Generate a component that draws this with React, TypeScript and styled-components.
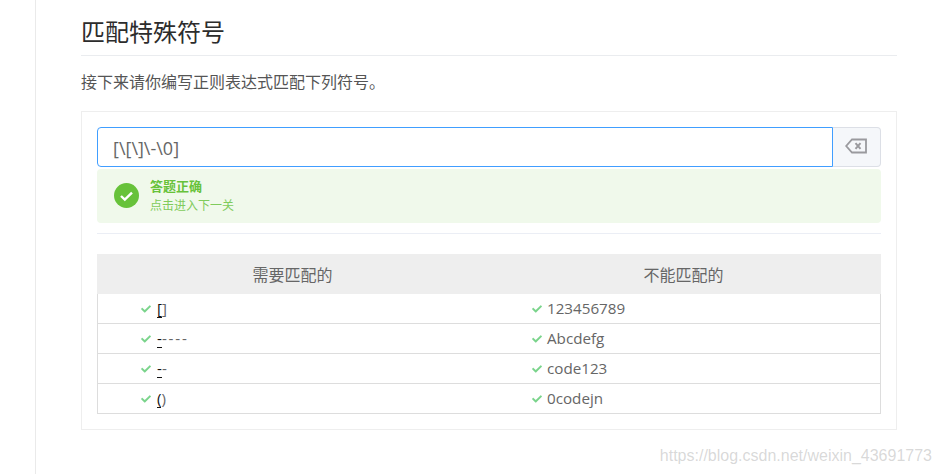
// 匹配特殊符号 关卡页面

import styled, { createGlobalStyle } from "styled-components";
import { FaCheck } from "react-icons/fa";

const GlobalStyle = createGlobalStyle`
    html, body {
        margin: 0;
        height: 474px;
        overflow: hidden;
        background: #fff;
        font-family: "Open Sans", "Noto Sans CJK SC", sans-serif;
    }
    * {
        box-sizing: border-box;
    }
`;

const Page = styled.div`
    position: relative;
    height: 474px;
    margin-left: 35px;
    padding: 12px 44px 0 45px;
    border-left: 1px solid #eaeaea;
`;

const Title = styled.h2`
    margin: 0;
    height: 44px;
    font-size: 24px;
    font-weight: 400;
    line-height: 40px;
    color: #2c2c2c;
    border-bottom: 1px solid #eaecef;
`;

const Intro = styled.p`
    margin: 0;
    padding-top: 14px;
    height: 55px;
    font-size: 16px;
    line-height: 24px;
    color: #555;
`;

const Card = styled.div`
    width: 816px;
    height: 319px;
    padding: 15px;
    border: 1px solid #eeeeee;
`;

const InputRow = styled.div`
    display: flex;
    height: 40px;
`;

const RegexInput = styled.div`
    flex: 1;
    padding-left: 15px;
    font-size: 18px;
    line-height: 40px;
    color: #666;
    background: #fff;
    border: 1px solid #409eff;
    border-radius: 4px 0 0 4px;
`;

const ClearButton = styled.div`
    display: flex;
    align-items: center;
    justify-content: center;
    width: 48px;
    padding: 0 2px 2px 0;
    background: #f5f7fa;
    border: 1px solid #dcdfe6;
    border-left: none;
    border-radius: 0 4px 4px 0;
`;

const SuccessAlert = styled.div`
    display: flex;
    align-items: center;
    gap: 11px;
    height: 54px;
    margin-top: 2px;
    padding: 0 0 2px 17px;
    background: #f0f9eb;
    border-radius: 4px;
`;

const AlertText = styled.div`
    display: flex;
    flex-direction: column;
    gap: 2px;
    color: #67c23a;
`;

const AlertTitle = styled.div`
    font-size: 13px;
    font-weight: 700;
    line-height: 18px;
`;

const AlertDesc = styled.div`
    font-size: 12px;
    line-height: 17px;
    color: #7fcb5c;
`;

const Divider = styled.div`
    height: 1px;
    margin: 10px 0 20px;
    background: #ebeef5;
`;

const Table = styled.div`
    display: grid;
    grid-template-columns: 1fr 1fr;
    border: 1px solid #dddddd;
    border-top: none;
`;

const HeadCell = styled.div`
    height: 40px;
    margin: 0 -1px 0 -1px;
    padding-right: 2px;
    font-size: 16px;
    line-height: 43px;
    text-align: center;
    color: #666;
    background: #eeeeee;
    &:last-of-type {
        margin-left: 0;
    }
`;

const Cell = styled.div<{ $second?: boolean }>`
    display: flex;
    align-items: center;
    gap: ${(p) => (p.$second ? "5px" : "6px")};
    height: 30px;
    padding-left: 43px;
    padding-bottom: 2px;
    font-size: 15.2px;
    color: #666;
    border-bottom: 1px solid #dddddd;
    &:nth-last-child(-n + 2) {
        height: 29px;
        border-bottom: none;
    }
    svg {
        width: 10px;
        height: 10px;
        margin-top: 3px;
        color: #7bd48c;
    }
`;

const Matched = styled.span`
    display: inline-block;
    height: 20px;
    color: #111;
    border-bottom: 1px solid #111;
    line-height: 20px;
`;

const Rest = styled.span<{ $dash?: boolean }>`
    letter-spacing: ${(p) => (p.$dash ? "1.8px" : "0")};
`;

const Watermark = styled.div`
    position: absolute;
    right: 9px;
    bottom: 9px;
    font-family: "Liberation Sans", sans-serif;
    font-size: 16px;
    color: rgba(170, 170, 170, 0.45);
`;

const matchRows = [
    { hit: "[", rest: "]" },
    { hit: "-", rest: "----" },
    { hit: "-", rest: "-" },
    { hit: "(", rest: ")" },
];

const skipRows = ["123456789", "Abcdefg", "code123", "0codejn"];

function BackspaceIcon() {
    return (
        <svg width="22" height="16" viewBox="0 0 22 16" fill="none" stroke="#9a9a9e">
            <path d="M21 1.5H7L1.2 8 7 14.5H21Z" strokeWidth="1.8" />
            <path d="M10.5 5.2 15.5 10.8M15.5 5.2 10.5 10.8" strokeWidth="2" />
        </svg>
    );
}

function CheckCircleIcon() {
    return (
        <svg width="25" height="25" viewBox="0 0 25 25">
            <circle cx="12.5" cy="12.5" r="12.5" fill="#67c23a" />
            <path d="M7 13l3.8 3.6L18 9.6" fill="none" stroke="#fff" strokeWidth="2.4" />
        </svg>
    );
}

export default function App() {
    return (
        <Page>
            <GlobalStyle />
            <Title>匹配特殊符号</Title>
            <Intro>接下来请你编写正则表达式匹配下列符号。</Intro>
            <Card>
                <InputRow>
                    <RegexInput>{"[\\[\\]\\-\\0]"}</RegexInput>
                    <ClearButton>
                        <BackspaceIcon />
                    </ClearButton>
                </InputRow>
                <SuccessAlert>
                    <CheckCircleIcon />
                    <AlertText>
                        <AlertTitle>答题正确</AlertTitle>
                        <AlertDesc>点击进入下一关</AlertDesc>
                    </AlertText>
                </SuccessAlert>
                <Divider />
                <Table>
                    <HeadCell>需要匹配的</HeadCell>
                    <HeadCell>不能匹配的</HeadCell>
                    {matchRows.map((row, i) => [
                        <Cell key={`m${i}`}>
                            <FaCheck />
                            <span>
                                <Matched>{row.hit}</Matched>
                                <Rest $dash={row.hit === "-"}>{row.rest}</Rest>
                            </span>
                        </Cell>,
                        <Cell key={`s${i}`} $second>
                            <FaCheck />
                            <span>{skipRows[i]}</span>
                        </Cell>,
                    ])}
                </Table>
            </Card>
            <Watermark>https://blog.csdn.net/weixin_43691773</Watermark>
        </Page>
    );
}
